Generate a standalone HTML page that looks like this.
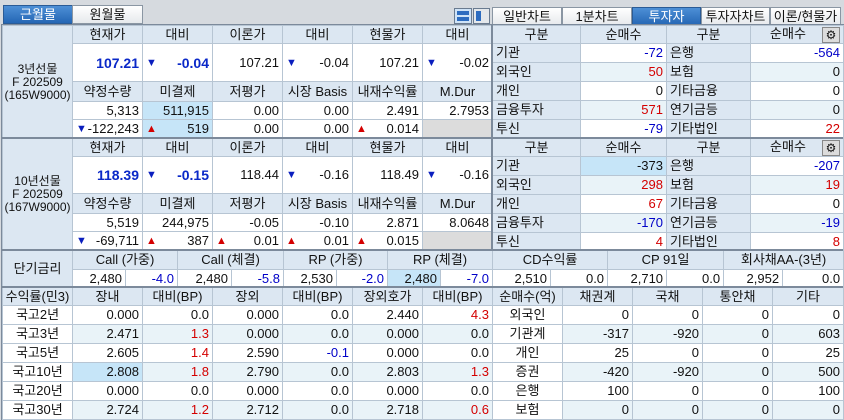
<!DOCTYPE html>
<html><head><meta charset="utf-8"><style>
*{margin:0;padding:0;box-sizing:border-box}
body{width:844px;height:420px;background:#d6dadf;font-family:"Liberation Sans","Noto Sans CJK KR",sans-serif;font-size:13px;color:#111;position:relative;overflow:hidden}
table{position:absolute;border-collapse:collapse;table-layout:fixed}
td{border:1px solid #b7c5d3;white-space:nowrap;overflow:hidden;text-align:right;padding:0 3px;line-height:14px;background:#fff}
td.h{background:#dce7f2;text-align:center}
td.lab{background:#dce7f2;text-align:center;padding:0;font-size:12px;line-height:13px}
td.l{background:#dce7f2;text-align:left}
td.c{text-align:center}
td.a{background:#e9f3f8}
td.hl{background:#c6e5f8}
td.g{background:#dcdcdc}
.b{color:#0000c8}.r{color:#d40000}
.bb{color:#0a28c8;font-weight:bold;font-size:14px}
.dn{float:left;color:#0a1ebe;font-size:11px}
.up{float:left;color:#d40000;font-size:11px}
.tab{position:absolute;top:5px;height:19px;border:1px solid #8a96a3;background:linear-gradient(#fff,#e6e9ec);text-align:center;line-height:17px;font-size:13px}
.sel{background:linear-gradient(#4d8fd6,#2466b4);color:#fff;border-color:#2a5b96}
.frame{position:absolute;border:2px solid #7c8a9b}
</style></head><body>
<div class="tab sel" style="left:3px;width:70px">근월물</div>
<div class="tab" style="left:72px;width:71px">원월물</div>
<div style="position:absolute;left:454px;top:8px;width:18px;height:16px;border:1px solid #6a7b90;background:#cfe3f7"><div style="margin:2px;height:4px;background:#2d6cc0"></div><div style="margin:2px;height:4px;background:#2d6cc0"></div></div>
<div style="position:absolute;left:473px;top:8px;width:17px;height:16px;border:1px solid #6a7b90;background:#e4e8ec"><div style="position:absolute;left:2px;top:2px;width:5px;height:10px;background:#2d6cc0"></div></div>
<div class="tab" style="left:492px;width:70px;top:7px">일반차트</div>
<div class="tab" style="left:562px;width:70px;top:7px">1분차트</div>
<div class="tab sel" style="left:632px;width:69px;top:7px">투자자</div>
<div class="tab" style="left:701px;width:69px;top:7px">투자자차트</div>
<div class="tab" style="left:770px;width:71px;top:7px">이론/현물가</div>

<div class="frame" style="left:1px;top:24px;width:843px;height:396px"></div>

<table style="left:2px;top:25px;width:490px">
<col style="width:70px"><col span="6" style="width:70px">
<tr style="height:18px"><td class="lab" rowspan="5">3년선물<br>F 202509<br>(165W9000)</td><td class="h">현재가</td><td class="h">대비</td><td class="h">이론가</td><td class="h">대비</td><td class="h">현물가</td><td class="h">대비</td></tr>
<tr style="height:38px"><td class="bb">107.21</td><td class="bb"><span class="dn">▼</span>-0.04</td><td>107.21</td><td><span class="dn">▼</span>-0.04</td><td>107.21</td><td><span class="dn">▼</span>-0.02</td></tr>
<tr style="height:20px"><td class="h">약정수량</td><td class="h">미결제</td><td class="h">저평가</td><td class="h">시장 Basis</td><td class="h">내재수익률</td><td class="h">M.Dur</td></tr>
<tr style="height:18px"><td>5,313</td><td class="hl">511,915</td><td>0.00</td><td>0.00</td><td>2.491</td><td>2.7953</td></tr>
<tr style="height:19px"><td><span class="dn">▼</span>-122,243</td><td class="hl"><span class="up">▲</span>519</td><td>0.00</td><td>0.00</td><td><span class="up">▲</span>0.014</td><td class="g"></td></tr>
</table>

<table style="left:2px;top:138px;width:490px">
<col style="width:70px"><col span="6" style="width:70px">
<tr style="height:18px"><td class="lab" rowspan="5">10년선물<br>F 202509<br>(167W9000)</td><td class="h">현재가</td><td class="h">대비</td><td class="h">이론가</td><td class="h">대비</td><td class="h">현물가</td><td class="h">대비</td></tr>
<tr style="height:37px"><td class="bb">118.39</td><td class="bb"><span class="dn">▼</span>-0.15</td><td>118.44</td><td><span class="dn">▼</span>-0.16</td><td>118.49</td><td><span class="dn">▼</span>-0.16</td></tr>
<tr style="height:20px"><td class="h">약정수량</td><td class="h">미결제</td><td class="h">저평가</td><td class="h">시장 Basis</td><td class="h">내재수익률</td><td class="h">M.Dur</td></tr>
<tr style="height:18px"><td>5,519</td><td>244,975</td><td>-0.05</td><td>-0.10</td><td>2.871</td><td>8.0648</td></tr>
<tr style="height:19px"><td><span class="dn">▼</span>-69,711</td><td><span class="up">▲</span>387</td><td><span class="up">▲</span>0.01</td><td><span class="up">▲</span>0.01</td><td><span class="up">▲</span>0.015</td><td class="g"></td></tr>
</table>

<table style="left:492px;top:25px;width:351px">
<col style="width:88px"><col style="width:86px"><col style="width:84px"><col style="width:93px">
<tr style="height:18px"><td class="h">구분</td><td class="h">순매수</td><td class="h">구분</td><td class="h">순매수<span style="float:right;width:18px;height:16px;background:#dcdcdc;border:1px solid #888;font-size:12px;line-height:14px">⚙</span></td></tr>
<tr style="height:19px"><td class="l">기관</td><td class="b">-72</td><td class="l">은행</td><td class="b">-564</td></tr>
<tr style="height:19px"><td class="l">외국인</td><td class="a r">50</td><td class="l">보험</td><td class="a">0</td></tr>
<tr style="height:19px"><td class="l">개인</td><td>0</td><td class="l">기타금융</td><td>0</td></tr>
<tr style="height:19px"><td class="l">금융투자</td><td class="a r">571</td><td class="l">연기금등</td><td class="a">0</td></tr>
<tr style="height:19px"><td class="l">투신</td><td class="b">-79</td><td class="l">기타법인</td><td class="r">22</td></tr>
</table>

<table style="left:492px;top:138px;width:351px">
<col style="width:88px"><col style="width:86px"><col style="width:84px"><col style="width:93px">
<tr style="height:18px"><td class="h">구분</td><td class="h">순매수</td><td class="h">구분</td><td class="h">순매수<span style="float:right;width:18px;height:16px;background:#dcdcdc;border:1px solid #888;font-size:12px;line-height:14px">⚙</span></td></tr>
<tr style="height:19px"><td class="l">기관</td><td class="hl">-373</td><td class="l">은행</td><td class="b">-207</td></tr>
<tr style="height:19px"><td class="l">외국인</td><td class="a r">298</td><td class="l">보험</td><td class="a r">19</td></tr>
<tr style="height:19px"><td class="l">개인</td><td class="r">67</td><td class="l">기타금융</td><td>0</td></tr>
<tr style="height:19px"><td class="l">금융투자</td><td class="a b">-170</td><td class="l">연기금등</td><td class="a b">-19</td></tr>
<tr style="height:18px"><td class="l">투신</td><td class="r">4</td><td class="l">기타법인</td><td class="r">8</td></tr>
</table>

<table style="left:2px;top:250px;width:841px">
<col style="width:70px"><col style="width:53px"><col style="width:52px"><col style="width:54px"><col style="width:52px"><col style="width:53px"><col style="width:51px"><col style="width:53px"><col style="width:52px"><col style="width:58px"><col style="width:57px"><col style="width:59px"><col style="width:57px"><col style="width:59px"><col style="width:61px">
<tr style="height:19px"><td class="h" rowspan="2">단기금리</td><td class="h" colspan="2">Call (가중)</td><td class="h" colspan="2">Call (체결)</td><td class="h" colspan="2">RP (가중)</td><td class="h" colspan="2">RP (체결)</td><td class="h" colspan="2">CD수익률</td><td class="h" colspan="2">CP 91일</td><td class="h" colspan="2">회사채AA-(3년)</td></tr>
<tr style="height:18px"><td>2,480</td><td class="b">-4.0</td><td>2,480</td><td class="b">-5.8</td><td>2,530</td><td class="b">-2.0</td><td class="hl">2,480</td><td class="b">-7.0</td><td>2,510</td><td>0.0</td><td>2,710</td><td>0.0</td><td>2,952</td><td>0.0</td></tr>
</table>

<table style="left:2px;top:287px;width:490px">
<col span="7" style="width:70px">
<tr style="height:18px"><td class="h" style="padding:0">수익률(민3)</td><td class="h">장내</td><td class="h">대비(BP)</td><td class="h">장외</td><td class="h">대비(BP)</td><td class="h">장외호가</td><td class="h">대비(BP)</td></tr>
<tr style="height:19px"><td class="c">국고2년</td><td>0.000</td><td>0.0</td><td>0.000</td><td>0.0</td><td>2.440</td><td class="r">4.3</td></tr>
<tr style="height:19px"><td class="c">국고3년</td><td class="a">2.471</td><td class="a r">1.3</td><td class="a">0.000</td><td class="a">0.0</td><td class="a">0.000</td><td class="a">0.0</td></tr>
<tr style="height:19px"><td class="c">국고5년</td><td>2.605</td><td class="r">1.4</td><td>2.590</td><td class="b">-0.1</td><td>0.000</td><td>0.0</td></tr>
<tr style="height:19px"><td class="c">국고10년</td><td class="hl">2.808</td><td class="a r">1.8</td><td class="a">2.790</td><td class="a">0.0</td><td class="a">2.803</td><td class="a r">1.3</td></tr>
<tr style="height:19px"><td class="c">국고20년</td><td>0.000</td><td>0.0</td><td>0.000</td><td>0.0</td><td>0.000</td><td>0.0</td></tr>
<tr style="height:19px"><td class="c">국고30년</td><td class="a">2.724</td><td class="a r">1.2</td><td class="a">2.712</td><td class="a">0.0</td><td class="a">2.718</td><td class="a r">0.6</td></tr>
</table>

<table style="left:492px;top:287px;width:351px">
<col style="width:70px"><col style="width:70px"><col style="width:70px"><col style="width:70px"><col style="width:71px">
<tr style="height:18px"><td class="h" style="padding:0">순매수(억)</td><td class="h">채권계</td><td class="h">국채</td><td class="h">통안채</td><td class="h">기타</td></tr>
<tr style="height:19px"><td class="c">외국인</td><td>0</td><td>0</td><td>0</td><td>0</td></tr>
<tr style="height:19px"><td class="c">기관계</td><td class="a">-317</td><td class="a">-920</td><td class="a">0</td><td class="a">603</td></tr>
<tr style="height:19px"><td class="c">개인</td><td>25</td><td>0</td><td>0</td><td>25</td></tr>
<tr style="height:19px"><td class="c">증권</td><td class="a">-420</td><td class="a">-920</td><td class="a">0</td><td class="a">500</td></tr>
<tr style="height:19px"><td class="c">은행</td><td>100</td><td>0</td><td>0</td><td>100</td></tr>
<tr style="height:19px"><td class="c">보험</td><td class="a">0</td><td class="a">0</td><td class="a">0</td><td class="a">0</td></tr>
</table>

<div style="position:absolute;left:491px;top:25px;width:2px;height:225px;background:#7c8a9b"></div>
<div style="position:absolute;left:2px;top:137px;width:841px;height:2px;background:#7c8a9b"></div>
<div style="position:absolute;left:2px;top:249px;width:841px;height:2px;background:#7c8a9b"></div>
<div style="position:absolute;left:2px;top:286px;width:841px;height:2px;background:#7c8a9b"></div>
</body></html>
